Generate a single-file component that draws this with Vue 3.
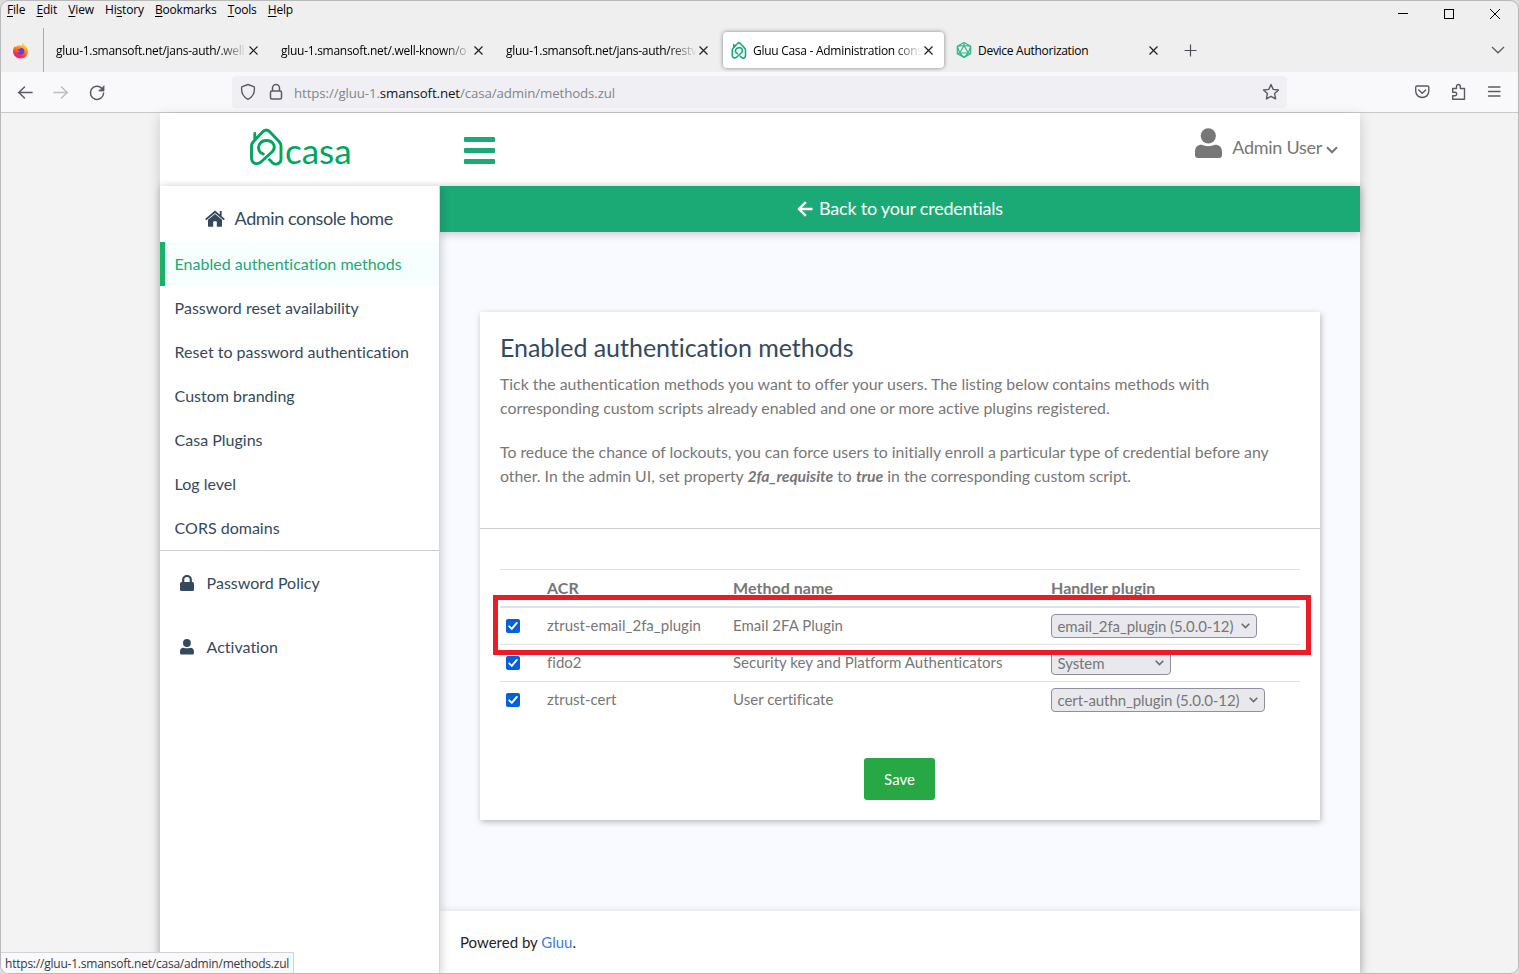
<script setup>
const menu = [
  { pre: '', key: 'F', post: 'ile' },
  { pre: '', key: 'E', post: 'dit' },
  { pre: '', key: 'V', post: 'iew' },
  { pre: 'Hi', key: 's', post: 'tory' },
  { pre: '', key: 'B', post: 'ookmarks' },
  { pre: '', key: 'T', post: 'ools' },
  { pre: '', key: 'H', post: 'elp' },
]
const tabs = [
  { title: 'gluu-1.smansoft.net/jans-auth/.well' },
  { title: 'gluu-1.smansoft.net/.well-known/o' },
  { title: 'gluu-1.smansoft.net/jans-auth/restv' },
  { title: 'Gluu Casa - Administration cons', icon: 'casa', active: true },
  { title: 'Device Authorization', icon: 'device' },
]
const nav = [
  'Enabled authentication methods',
  'Password reset availability',
  'Reset to password authentication',
  'Custom branding',
  'Casa Plugins',
  'Log level',
  'CORS domains',
]
const rows = [
  { acr: 'ztrust-email_2fa_plugin', name: 'Email 2FA Plugin', plugin: 'email_2fa_plugin (5.0.0-12)', size: 'w206' },
  { acr: 'fido2', name: 'Security key and Platform Authenticators', plugin: 'System', size: 'w120' },
  { acr: 'ztrust-cert', name: 'User certificate', plugin: 'cert-authn_plugin (5.0.0-12)', size: 'w214' },
]
</script>

<template>
  <div class="window">
    <div class="titlebar">
      <div class="menu">
        <span v-for="m in menu" :key="m.key + m.post">{{ m.pre }}<u>{{ m.key }}</u>{{ m.post }}</span>
      </div>
      <svg class="winbtns" width="104" height="12" viewBox="0 0 104 12" fill="none" stroke="#000" shape-rendering="crispEdges">
        <path d="M0 5.500h10M46.500 1.500h9v9h-9z" />
        <path d="M92 1l10 10M102 1l-10 10" shape-rendering="auto" />
      </svg>
    </div>

    <div class="tabbar">
      <div class="pinned">
        <svg width="17" height="17" viewBox="0 0 17 17">
          <defs>
            <linearGradient id="fox" x1="0.8" y1="0" x2="0.3" y2="1">
              <stop offset="0" stop-color="#fff44f" />
              <stop offset="0.4" stop-color="#ff980e" />
              <stop offset="0.75" stop-color="#ff3647" />
              <stop offset="1" stop-color="#e31587" />
            </linearGradient>
          </defs>
          <path d="M10.300 0.800c1.700 1 2 2.300 3 3.200 2.300 1.900 3 4 2.700 6.200-.6 3.500-3.700 6.200-7.500 6.200C4.300 16.400 1 13.400 1 9.300c0-2.200.8-4.100 2.100-5.300.1.700.3 1 .6 1.300C4.600 4 5.700 3.500 7 3.600c1.300-.2 2.200-.1 3 .3-.2-1.200-.1-2.200.3-3.100z" fill="url(#fox)" />
          <path d="M8.500 5.800c2.400 0 3.900 1.500 3.900 3.500s-1.600 3.500-3.600 3.500c-2.100 0-3.500-1.400-3.500-3.100 1 .7 2.400.5 3.200-.3-1.600 0-2.700-.8-2.900-1.900.8-.5 1.500-.4 2.200-.3z" fill="#6b3bd8" />
        </svg>
      </div>
      <div v-for="t in tabs" :key="t.title" class="tab" :class="{ active: t.active, plain: !t.icon }">
        <svg v-if="t.icon === 'casa'" class="favicon" width="16" height="17" viewBox="0 0 33 38" fill="none" stroke="#1aa876" stroke-width="3.600" stroke-linecap="round" stroke-linejoin="round">
          <path d="M10.500 24.500C6.500 20.500 9 12.500 16.500 12.500c6.500 0 10 6 6 11L11.500 33.500C7.500 37.500 1.500 35.500 1.500 30V17.800c0-1.800.8-3.200 2-4.200L12.500 4c2.300-2.700 5.200-2.700 7.500 0l9 9.600c1.300 1.200 2 2.400 2 4.200V31c0 4.800-5 6.500-8.500 3.800l-3-3M10.500 24.500l2.700 1.500M4.800 11V5.500" />
        </svg>
        <svg v-if="t.icon === 'device'" class="favicon" width="16" height="18" viewBox="0 0 16 18" fill="none" stroke="#2db98c" stroke-width="1.200" stroke-linejoin="round">
          <path d="M8 1.500l6.700 3.700v7.600L8 16.500l-6.700-3.700V5.200zM8 4.500l4.300 7.500H3.700zM8 1.500v3M1.300 5.200L8 4.500l6.700.7-2.400 6.800 2.400.8M1.300 5.200L3.700 12l-2.400.8M3.700 12L8 16.500l4.300-4.500" />
        </svg>
        <span class="tabtitle" :class="{ fade: t.icon !== 'device' }">{{ t.title }}</span>
        <svg class="x" width="9" height="9" viewBox="0 0 9 9" stroke="#222" stroke-width="1.200"><path d="M.5.500l8 8M8.500.500l-8 8" /></svg>
      </div>
      <svg class="plus" width="13" height="13" viewBox="0 0 13 13" stroke="#4c4b58" stroke-width="1.200"><path d="M6.500.500v12M.5 6.500h12" /></svg>
      <svg class="alltabs" width="14" height="8" viewBox="0 0 14 8" fill="none" stroke="#5b5b66" stroke-width="1.300"><path d="M1 1l6 5.800L13 1" /></svg>
    </div>

    <div class="toolbar">
      <svg class="nav-ic" width="92" height="18" viewBox="0 0 92 18" fill="none" stroke="#5b5b66" stroke-width="1.500" stroke-linecap="round" stroke-linejoin="round">
        <path d="M15 9.500H1.500M7.500 4L1.800 9.500l5.700 5.500" />
        <path d="M37 9.500h13.500M44.500 4L50.200 9.500l-5.700 5.500" stroke="#bdbdc4" />
        <path d="M84.800 5.300A6.600 6.600 0 1 0 86.600 10" />
        <path d="M87 3v5h-5z" fill="#5b5b66" stroke-width=".8" />
      </svg>
      <div class="urlbar">
        <svg width="16" height="18" viewBox="0 0 16 18" fill="none" stroke="#5b5b66" stroke-width="1.400" stroke-linejoin="round">
          <path d="M8 1.500l6.300 2.300c.7 5.700-1.300 10-6.300 12.500C3 13.800 1 9.500 1.700 3.800z" />
        </svg>
        <svg class="lock" width="14" height="18" viewBox="0 0 14 18" fill="none" stroke="#5b5b66" stroke-width="1.500" stroke-linejoin="round">
          <rect x="1.500" y="8" width="11" height="8" rx="1.200" />
          <path d="M3.500 8V5a3.500 3.500 0 0 1 7 0v3" />
        </svg>
        <span class="url">https://gluu-1.<b>smansoft.net</b>/casa/admin/methods.zul</span>
        <svg class="star" width="18" height="18" viewBox="0 0 18 18" fill="none" stroke="#5b5b66" stroke-width="1.400" stroke-linejoin="round">
          <path d="M9 1.500l2.200 4.900 5.300.6-3.900 3.600 1 5.300L9 13.300l-4.600 2.600 1-5.300L1.500 7l5.300-.6z" />
        </svg>
      </div>
      <svg class="actions" width="88" height="18" viewBox="0 0 88 18" fill="none" stroke="#5b5b66" stroke-width="1.400" stroke-linecap="round" stroke-linejoin="round">
        <path d="M3 3h10.500c.8 0 1.300.5 1.300 1.300V8c0 8.700-13.100 8.700-13.100 0V4.300C1.700 3.500 2.200 3 3 3zM4.700 7l3.500 3.200L11.700 7" />
        <path d="M38.700 5.500h3.800V3.400a1.900 1.900 0 0 1 3.800 0v2.100h4.200v10.800H38.700v-3.500h2.200a1.800 1.800 0 0 0 0-3.600h-2.200z" />
        <path d="M74.500 4h11.500M74.500 8.500h11.500M74.500 13h11.500" stroke-width="1.300" />
      </svg>
    </div>

    <div class="page">
      <div class="site">
        <header class="top">
          <div class="logo">
            <svg width="33" height="38" viewBox="0 0 33 38" fill="none" stroke="#00a65f" stroke-width="2.900" stroke-linecap="round" stroke-linejoin="round">
              <path d="M10.500 24.500C6.500 20.500 9 12.500 16.500 12.500c6.500 0 10 6 6 11L11.500 33.500C7.500 37.500 1.500 35.500 1.500 30V17.800c0-1.800.8-3.200 2-4.200L12.500 4c2.300-2.700 5.200-2.700 7.500 0l9 9.600c1.300 1.200 2 2.400 2 4.200V31c0 4.800-5 6.500-8.500 3.800l-3-3M10.500 24.500l2.700 1.500M4.800 11V5.500" />
            </svg>
            <span>casa</span>
          </div>
          <div class="burger"><i></i><i></i><i></i></div>
          <div class="user">
            <svg width="27" height="31" viewBox="0 0 27 31" fill="#777">
              <circle cx="13.300" cy="7.800" r="7.600" />
              <path d="M6.700 16.800c4 1.800 9.200 1.800 13.200 0 4.300 0 7.100 2.500 7.100 7.200v3c0 1.700-1 2.900-2.700 2.900H2.700C1 29.900 0 28.700 0 27v-3c0-4.700 2.500-7.200 6.700-7.200z" />
            </svg>
            <span>Admin User</span>
            <svg class="chev" width="12" height="8" viewBox="0 0 12 8" fill="none" stroke="#777" stroke-width="2.100"><path d="M1 1.200l5 5 5-5" /></svg>
          </div>
        </header>

        <div class="body">
          <aside>
            <div class="home">
              <svg width="20" height="17" viewBox="0 0 20 17" fill="#34495e">
                <path d="M10 4l7 5.800V16c0 .5-.3.800-.8.800h-4.400V12c0-.5-.3-.8-.8-.8H9c-.5 0-.8.3-.8.800v4.800H3.800c-.5 0-.8-.3-.8-.8V9.800z" />
                <path d="M.7 9.600L10 1.700l9.300 7.900M15.700 1v5" fill="none" stroke="#34495e" stroke-width="1.900" />
              </svg>
              <span>Admin console home</span>
            </div>
            <a v-for="(n, i) in nav" :key="n" class="item" :class="{ on: i === 0 }">{{ n }}</a>
            <div class="extras">
              <div class="extra">
                <svg width="14" height="16" viewBox="0 0 14 16" fill="#34495e">
                  <rect y="7" width="14" height="9" rx="1.500" />
                  <path d="M3.200 8V4.800a3.800 3.800 0 0 1 7.600 0V8" fill="none" stroke="#34495e" stroke-width="2.200" />
                </svg>
                <span>Password Policy</span>
              </div>
              <div class="extra">
                <svg width="14" height="16" viewBox="0 0 27 31" fill="#34495e">
                  <circle cx="13.300" cy="7.800" r="7.600" />
                  <path d="M6.700 16.800c4 1.800 9.200 1.800 13.200 0 4.300 0 7.100 2.500 7.100 7.200v3c0 1.700-1 2.900-2.700 2.900H2.700C1 29.900 0 28.700 0 27v-3c0-4.700 2.500-7.200 6.700-7.200z" />
                </svg>
                <span>Activation</span>
              </div>
            </div>
          </aside>

          <div class="right">
            <div class="back">
              <svg width="16" height="16" viewBox="0 0 16 16" fill="none" stroke="#fff" stroke-width="2.400"><path d="M8.800 1.200L2 8l6.800 6.800M2 8h13.500" /></svg>
              <span>Back to your credentials</span>
            </div>
            <main>
              <section class="card">
                <div class="intro">
                  <h1>Enabled authentication methods</h1>
                  <p>Tick the authentication methods you want to offer your users. The listing below contains methods with<br>corresponding custom scripts already enabled and one or more active plugins registered.</p>
                  <p>To reduce the chance of lockouts, you can force users to initially enroll a particular type of credential before any<br>other. In the admin UI, set property <em>2fa_requisite</em> to <em>true</em> in the corresponding custom script.</p>
                </div>
                <div class="table">
                  <div class="row head"><span></span><span>ACR</span><span>Method name</span><span>Handler plugin</span></div>
                  <div v-for="r in rows" :key="r.acr" class="row">
                    <span class="check">
                      <svg width="14" height="14" viewBox="0 0 14 14"><rect width="14" height="14" rx="2" fill="#0060df" /><path d="M3.200 7.300l2.600 2.600 5-6" fill="none" stroke="#fff" stroke-width="1.900" stroke-linecap="round" stroke-linejoin="round" /></svg>
                    </span>
                    <span class="txt">{{ r.acr }}</span>
                    <span class="txt">{{ r.name }}</span>
                    <div class="select" :class="r.size">
                      <span>{{ r.plugin }}</span>
                      <svg width="9" height="6" viewBox="0 0 9 6" fill="none" stroke="#6c6c70" stroke-width="1.600"><path d="M.7.700l3.800 3.800L8.300.700" /></svg>
                    </div>
                  </div>
                  <div class="highlight"></div>
                </div>
                <button class="save">Save</button>
              </section>
            </main>
            <footer>Powered by&nbsp;<a>Gluu</a>.</footer>
          </div>
        </div>
      </div>
    </div>
    <div class="status">https://gluu-1.smansoft.net/casa/admin/methods.zul</div>
  </div>
</template>

<style>
html, body { margin: 0; background: #dcdcdc; overflow: hidden; }
</style>

<style scoped>
* { box-sizing: border-box; }
.window {
  position: relative; display: flex; flex-direction: column; overflow: hidden;
  width: 1519px; height: 974px; border: 1px solid #b9b9b9; border-radius: 9px;
  background: #efefef; font-family: "Open Sans", "Noto Sans", sans-serif; color: #000;
}
svg { display: block; flex: none; }
.titlebar { height: 27px; display: flex; justify-content: space-between; }
.menu { display: flex; gap: 11.300px; padding: 0 0 0 6px; font-size: 12px; line-height: 18px; letter-spacing: -0.2px; }
.menu u { text-underline-offset: 2px; }
.winbtns { margin: 7px 16px 0 0; }
.tabbar { height: 44px; display: flex; align-items: center; font-size: 12px; letter-spacing: -0.28px; }
.pinned { width: 43px; height: 44px; margin-right: 2px; border-right: 1px solid #a9a9ac; display: flex; align-items: center; padding-left: 11px; }
.tab { width: 221px; height: 36px; margin: 0 2px; padding: 0 11.500px 0 10px; display: flex; align-items: center; border-radius: 4px; }
.tab.plain { padding-left: 8px; }
.tab.active { background: #fff; box-shadow: 0 0 4px rgba(0, 0, 0, .45); }
.tab .favicon { margin: 0 6px 0 -2px; }
.tabtitle { flex: 1; white-space: nowrap; width: 0; }
.tabtitle.fade { mask-image: linear-gradient(to right, #000 calc(100% - 28px), transparent); }
.tab .x { margin-left: 2px; }
.plus { margin-left: 13px; }
.alltabs { margin: 0 13px 0 auto; }
.toolbar { height: 41px; background: #f9f9fb; border-bottom: 1px solid #c8c8cb; display: flex; align-items: center; }
.nav-ic { margin-left: 16px; }
.urlbar { margin-left: 123px; width: 1055px; height: 32px; border-radius: 4px; background: #f0f0f4; display: flex; align-items: center; padding: 0 7px 0 8px; }
.lock { margin-left: 13px; }
.url { margin: 2px 0 0 11px; font-size: 13.300px; letter-spacing: -0.12px; color: #84848b; }
.url b { font-weight: 400; color: #15141a; }
.star { margin-left: auto; }
.actions { margin-left: 127px; }
.page { flex: 1; min-height: 0; background: #f3f3f3; padding: 0 158px 0 159px; font-family: Lato, sans-serif; color: #34495e; }
.site { width: 1200px; height: 860px; box-shadow: 0 4px 12px rgba(0, 0, 0, .18); background: #fff; display: flex; flex-direction: column; }
.top { height: 73px; display: flex; align-items: flex-start; background: #fff; }
.logo { width: 279px; padding: 15px 0 0 90px; display: flex; color: #00a65f; }
.logo span { font-size: 35px; line-height: 40px; margin: 2px 0 0 2px; }
.burger { display: grid; gap: 6px; margin: 24px 0 0 25px; }
.burger i { width: 31px; height: 5px; border-radius: 1px; background: #1ba975; }
.user { margin: 15px 22px 0 auto; display: flex; font-size: 18px; line-height: 24px; color: #777; letter-spacing: -0.28px; }
.user span { margin: 7px 4px 0 10px; }
.chev { margin-top: 18px; }
.body { flex: 1; min-height: 0; display: flex; box-shadow: 0 0 8px rgba(0, 0, 0, .1); }
aside { position: relative; width: 280px; border-right: 1px solid #d8d8da; background: #fff; box-shadow: 2px 2px 8px rgba(0, 0, 0, .16); font-size: 16px; letter-spacing: 0.005px; }
.home { height: 56px; display: flex; align-items: center; padding: 8px 0 0 45px; font-size: 18px; letter-spacing: -0.4px; }
.home span { margin: -1px 0 0 9.600px; }
.item { height: 44px; display: flex; align-items: center; padding: 0 0 2px 14.600px; }
.item.on { border-left: 5px solid #16b364; padding-left: 9.600px; background: #f6fffd; color: #1ba975; }
.extras { border-top: 1px solid #ccc; }
.extra { height: 64px; display: flex; align-items: center; padding-left: 20px; }
.extra span { margin: -2px 0 0 12.600px; }
.right { flex: 1; display: flex; flex-direction: column; background: #f9faff; }
.back { height: 46px; background: #1ba975; color: #fff; display: flex; justify-content: center; align-items: center; font-size: 18px; letter-spacing: -0.22px; box-shadow: 0 2px 8px rgba(0, 0, 0, .2); }
.back svg { margin-right: 6px; }
.back span { margin-top: -2px; }
main { flex: 1; padding: 80px 40px 0; }
.card { height: 508px; background: #fff; box-shadow: 1px 2px 6px rgba(0, 0, 0, .27); color: #777; }
.intro { height: 217px; padding: 19px 20px 0; border-bottom: 1px solid #ccc; white-space: nowrap; }
h1 { margin: 0 0 9px; font-size: 25px; line-height: 32px; font-weight: 400; color: #34495e; letter-spacing: -0.03px; }
p { margin: 0 0 20px; font-size: 15.840px; line-height: 24px; letter-spacing: -0.004px; }
em { font-weight: 700; letter-spacing: -0.08px; }
.table { position: relative; margin: 40px 20px 0; font-size: 15px; }
.row { height: 37px; border-top: 1px solid #dee2e6; display: grid; grid-template-columns: 47px 186px 318px 1fr; align-items: center; }
.row.head { height: 39px; border-bottom: 2px solid #dee2e6; font-weight: 700; font-size: 16px; letter-spacing: 0.03px; }
.row.head span { margin-top: -1px; }
.row.head + .row { border-top: 0; height: 36px; }
.check { padding-left: 6px; }
.txt { margin-top: -2px; letter-spacing: 0.02px; }
.select { height: 24px; border: 1px solid #8f8f9d; border-radius: 4px; background: #e9e9ed; display: flex; align-items: center; justify-content: space-between; padding: 0 6px 0 5.500px; margin-top: -1px; letter-spacing: -0.08px; }
.w206 { width: 206px; }
.w120 { width: 120px; }
.w214 { width: 214px; }
.highlight { position: absolute; left: -7px; top: 26px; width: 818px; height: 60px; border: 5px solid #ed1c24; }
.save { display: block; width: 71px; height: 42px; margin: 40px 0 0 384px; border: 0; border-radius: 3px; background: #28a745; color: #fff; font: 15px Lato, sans-serif; }
footer { height: 62px; padding-left: 20px; display: flex; align-items: center; background: #fff; box-shadow: 0 0 8px rgba(0, 0, 0, .12); color: #212529; font-size: 15px; }
footer a { color: #3b7fd4; }
.status { position: absolute; left: 0; bottom: 0; height: 21px; padding: 0 4px; border: 1px solid #d2d2d5; border-width: 1px 1px 0 0; background: #f9f9fb; color: #38383d; font-size: 12px; line-height: 22px; letter-spacing: -0.22px; }
</style>
